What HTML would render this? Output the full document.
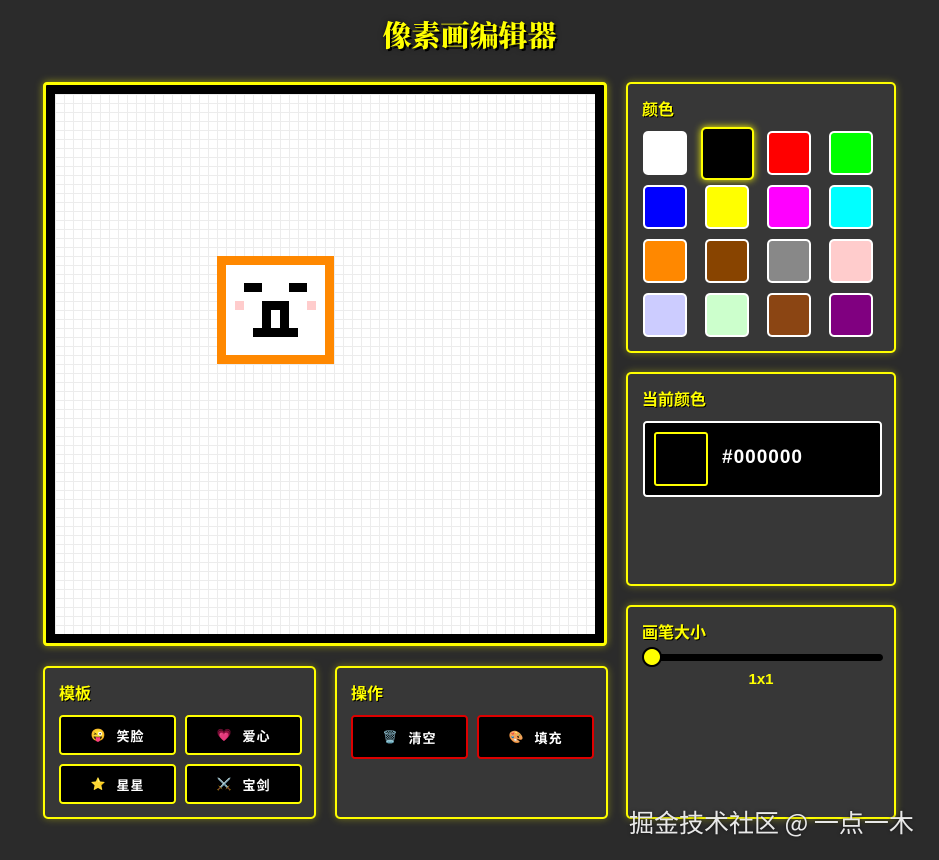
<!DOCTYPE html>
<html><head><meta charset="utf-8"><style>
*{box-sizing:border-box;margin:0;padding:0}
body{width:939px;height:860px;background:#2b2b2b;font-family:"Liberation Sans","Noto Sans CJK SC",sans-serif;position:relative;overflow:hidden}
.abs{position:absolute}
h1{position:absolute;left:0;width:939px;top:14px;text-align:center;color:#ffff00;font-size:29px;font-family:"Noto Serif CJK SC","Noto Sans CJK SC",serif;font-weight:900;text-shadow:2px 2px 0 #000,0 0 6px rgba(0,0,0,.6)}
.panel{position:absolute;background:#373737;border:2px solid #ffff00;border-radius:5px;box-shadow:0 0 8px rgba(255,255,0,.35)}
.ttl{position:absolute;left:14px;top:12px;color:#ffff00;font-size:16px;font-weight:bold;text-shadow:1px 1px 0 #000}
.sw{position:absolute;width:44px;height:44px;border:2px solid #fff;border-radius:5px}
.btn{position:absolute;width:117px;height:40px;background:#000;border:2px solid #ffff00;border-radius:4px;color:#fff;font-size:13px;font-weight:bold;display:flex;align-items:center;justify-content:center;gap:10px;letter-spacing:1px}
.btn.r{border-color:#dd0000}
.btn i{font-style:normal;font-size:12px}
.px{position:absolute;background:#000}
</style></head><body>
<h1>像素画编辑器</h1>

<div class="abs" style="left:43px;top:82px;width:564px;height:564px;background:#000;border:3px solid #ffff00;border-radius:4px;box-shadow:0 0 8px rgba(255,255,0,.5)"></div>
<div class="abs" style="left:55px;top:94px;width:540px;height:540px;background-color:#fff;background-image:linear-gradient(#ececec 1px,transparent 1px),linear-gradient(90deg,#ececec 1px,transparent 1px);background-size:9px 9px">
  <div class="abs" style="left:162px;top:162px;width:117px;height:108px;border:9px solid #ff8800;background:#fff"></div>
  <div class="px" style="left:189px;top:189px;width:18px;height:9px"></div>
  <div class="px" style="left:234px;top:189px;width:18px;height:9px"></div>
  <div class="px" style="left:180px;top:207px;width:9px;height:9px;background:#ffcccc"></div>
  <div class="px" style="left:252px;top:207px;width:9px;height:9px;background:#ffcccc"></div>
  <div class="px" style="left:207px;top:207px;width:27px;height:9px"></div>
  <div class="px" style="left:207px;top:207px;width:9px;height:27px"></div>
  <div class="px" style="left:225px;top:207px;width:9px;height:27px"></div>
  <div class="px" style="left:198px;top:234px;width:45px;height:9px"></div>
</div>

<div class="panel" style="left:626px;top:82px;width:270px;height:271px">
  <div class="ttl">颜色</div>
  <div class="sw" style="left:15px;top:47px;background:#fff"></div>
  <div class="sw" style="left:73px;top:43px;width:53px;height:53px;background:#000;border-color:#ffff00;box-shadow:0 0 8px #ffff00"></div>
  <div class="sw" style="left:139px;top:47px;background:#f00"></div>
  <div class="sw" style="left:201px;top:47px;background:#0f0"></div>
  <div class="sw" style="left:15px;top:101px;background:#00f"></div>
  <div class="sw" style="left:77px;top:101px;background:#ff0"></div>
  <div class="sw" style="left:139px;top:101px;background:#f0f"></div>
  <div class="sw" style="left:201px;top:101px;background:#0ff"></div>
  <div class="sw" style="left:15px;top:155px;background:#ff8800"></div>
  <div class="sw" style="left:77px;top:155px;background:#884400"></div>
  <div class="sw" style="left:139px;top:155px;background:#888"></div>
  <div class="sw" style="left:201px;top:155px;background:#ffcccc"></div>
  <div class="sw" style="left:15px;top:209px;background:#ccccff"></div>
  <div class="sw" style="left:77px;top:209px;background:#ccffcc"></div>
  <div class="sw" style="left:139px;top:209px;background:#8b4513"></div>
  <div class="sw" style="left:201px;top:209px;background:#800080"></div>
</div>

<div class="panel" style="left:626px;top:372px;width:270px;height:214px">
  <div class="ttl">当前颜色</div>
  <div class="abs" style="left:15px;top:47px;width:239px;height:76px;background:#000;border:2px solid #fff;border-radius:4px">
    <div class="abs" style="left:9px;top:9px;width:54px;height:54px;border:2px solid #ffff00;border-radius:3px;background:#000"></div>
    <div class="abs" style="left:77px;top:24px;color:#fff;font-size:19px;font-weight:bold;letter-spacing:1px">#000000</div>
  </div>
</div>

<div class="panel" style="left:626px;top:605px;width:270px;height:214px">
  <div class="ttl">画笔大小</div>
  <div class="abs" style="left:20px;top:47px;width:235px;height:7px;background:#000;border-radius:4px"></div>
  <div class="abs" style="left:14px;top:40px;width:20px;height:20px;background:#ffff00;border:2px solid #000;border-radius:50%"></div>
  <div class="abs" style="left:0;width:266px;top:64px;text-align:center;color:#ffff00;font-size:15px;font-weight:bold">1x1</div>
</div>

<div class="panel" style="left:43px;top:666px;width:273px;height:153px">
  <div class="ttl">模板</div>
  <div class="btn" style="left:14px;top:47px"><i>😜</i>笑脸</div>
  <div class="btn" style="left:140px;top:47px"><i>💗</i>爱心</div>
  <div class="btn" style="left:14px;top:96px"><i>⭐</i>星星</div>
  <div class="btn" style="left:140px;top:96px"><i>⚔️</i>宝剑</div>
</div>

<div class="panel" style="left:335px;top:666px;width:273px;height:153px">
  <div class="ttl">操作</div>
  <div class="btn r" style="left:14px;top:47px;height:44px"><i>🗑️</i>清空</div>
  <div class="btn r" style="left:140px;top:47px;height:44px"><i>🎨</i>填充</div>
</div>

<div class="abs" style="left:629px;top:804px;color:#e8e8e8;font-size:25px;font-family:'Noto Sans CJK SC',sans-serif;text-shadow:0 0 3px rgba(0,0,0,.6);white-space:nowrap">掘金技术社区 @ 一点一木</div>
</body></html>
